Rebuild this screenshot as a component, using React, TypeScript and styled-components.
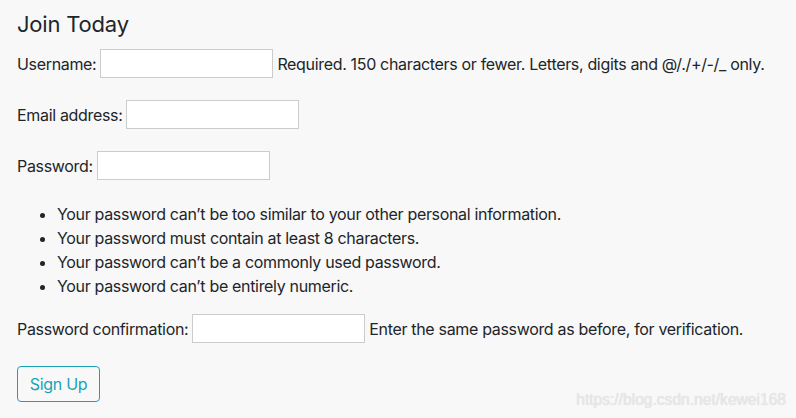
import React from "react";
import styled, { createGlobalStyle } from "styled-components";

const Global = createGlobalStyle`
  html, body { margin: 0; padding: 0; background: #f8f8f8; }
  body {
    font-family: Inter, "Noto Sans", "Liberation Sans", sans-serif;
    color: #212529;
    font-size: 16px;
    letter-spacing: -0.33px;
  }
`;

const Page = styled.div`
  position: relative;
  width: 796px;
  height: 418px;
  box-sizing: border-box;
  padding: 10px 17px 0;
  background: #f8f8f8;
`;

const Title = styled.h2`
  margin: 0 0 11px;
  font-size: 22px;
  font-weight: 400;
  line-height: 28px;
  letter-spacing: -0.2px;
  color: #212529;
`;

const Row = styled.div<{ $mt?: number }>`
  display: flex;
  align-items: center;
  gap: 4px;
  margin-top: ${(p) => p.$mt ?? 0}px;
  height: 29px;
  font-size: 16px;
  white-space: nowrap;
`;

const Label = styled.label`
  display: inline-block;
`;

const Input = styled.input`
  box-sizing: border-box;
  width: 173px;
  height: 29px;
  border: 1px solid #cccccc;
  background: #ffffff;
  margin: 0;
  padding: 0 4px;
  font: inherit;
`;

const Help = styled.span``;

const Rules = styled.ul`
  margin: 22px 0 0;
  padding-left: 40px;
  list-style: disc;
`;

const Rule = styled.li`
  line-height: 24px;
  font-size: 16px;
`;

const Button = styled.button`
  margin-top: 23px;
  box-sizing: border-box;
  width: 83px;
  height: 36px;
  border: 1px solid #17a2b8;
  border-radius: 4px;
  background: transparent;
  color: #17a2b8;
  font-family: inherit;
  font-size: 16px;
  letter-spacing: -0.3px;
  padding: 0;
  cursor: pointer;
`;

const Watermark = styled.div`
  position: absolute;
  right: 10px;
  bottom: 9px;
  font-family: "Liberation Sans", Arial, sans-serif;
  font-size: 15.6px;
  letter-spacing: 0;
  color: #e8e8e8;
  text-shadow: 0 0 1px #d4d4d4;
`;

export default function App() {
  return (
    <>
      <Global />
      <Page>
        <Title>Join Today</Title>
        <Row>
          <Label>Username:</Label>
          <Input type="text" />
          <Help>Required. 150 characters or fewer. Letters, digits and @/./+/-/_ only.</Help>
        </Row>
        <Row $mt={22}>
          <Label>Email address:</Label>
          <Input type="email" />
        </Row>
        <Row $mt={22}>
          <Label>Password:</Label>
          <Input type="password" />
        </Row>
        <Rules>
          <Rule>Your password can’t be too similar to your other personal information.</Rule>
          <Rule>Your password must contain at least 8 characters.</Rule>
          <Rule>Your password can’t be a commonly used password.</Rule>
          <Rule>Your password can’t be entirely numeric.</Rule>
        </Rules>
        <Row $mt={16}>
          <Label>Password confirmation:</Label>
          <Input type="password" />
          <Help>Enter the same password as before, for verification.</Help>
        </Row>
        <Button type="submit">Sign Up</Button>
        <Watermark>https://blog.csdn.net/kewei168</Watermark>
      </Page>
    </>
  );
}
